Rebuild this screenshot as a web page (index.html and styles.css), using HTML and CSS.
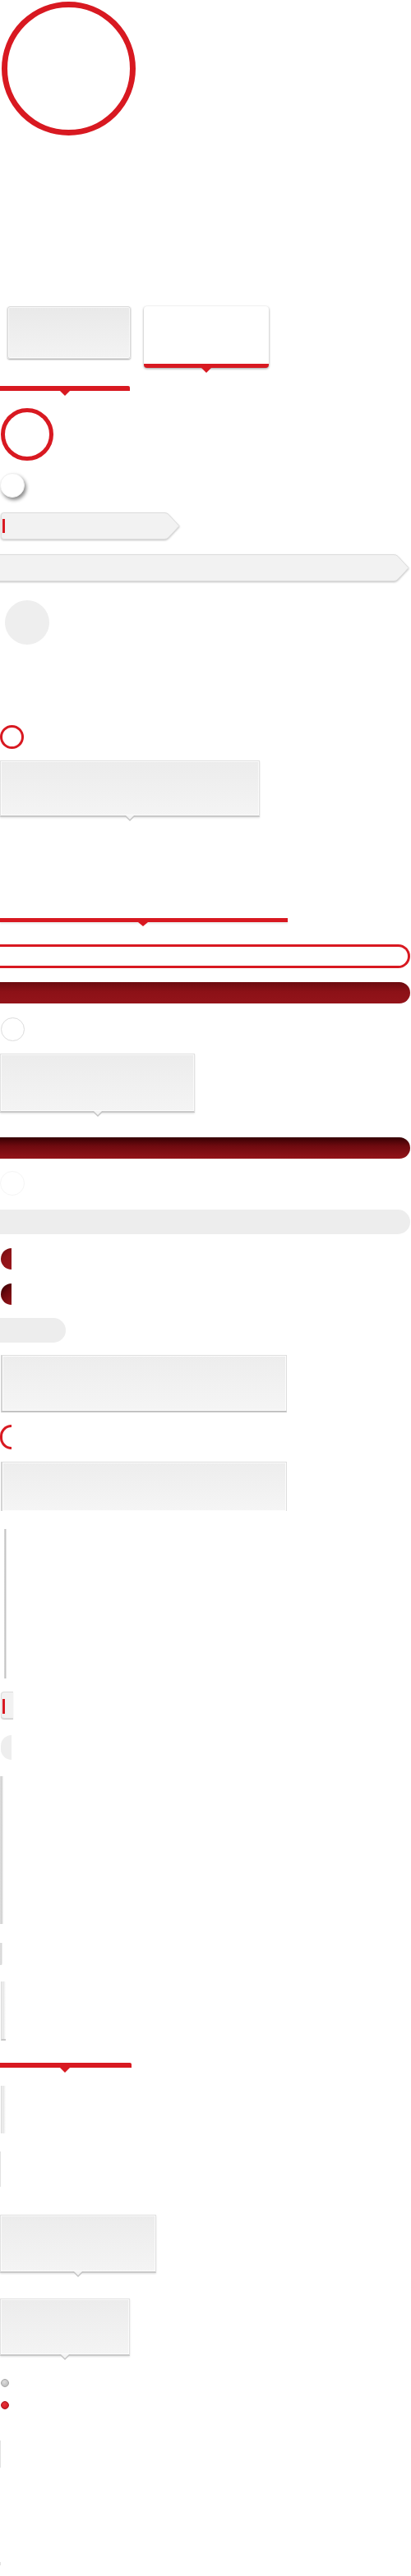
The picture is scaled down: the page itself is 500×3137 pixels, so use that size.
FILE: index.html
```html
<!DOCTYPE html>
<html lang="en">
<head>
<meta charset="utf-8">
<title>Sprite sheet</title>
<link rel="stylesheet" href="styles.css">
</head>
<body>
<div class="sheet">
  <div class="ring-big i1"></div>
  <div class="tabs-row i2">
    <div class="tab-off"></div>
    <div class="tab-on"></div>
  </div>
  <div class="red-bar i3"></div>
  <div class="ring-mid i4"></div>
  <div class="knob i5"></div>
  <svg class="arrow-tab i6" width="218" height="33" viewBox="0 0 218 33">
    <path d="M3.5,0.5 H199 Q202,0.5 204,2.5 L217,16.5 L204,30.5 Q202,32.5 199,32.5 H3.5 Q0.5,32.5 0.5,29.5 V3.5 Q0.5,0.5 3.5,0.5 Z" fill="#f2f2f2" stroke="#dcdcdc"/>
    <rect x="2" y="8" width="3" height="17" fill="#d81921"/>
  </svg>
  <svg class="arrow-tab i7" width="498" height="33" viewBox="0 0 498 33">
    <path d="M-2,0.5 H479 Q482,0.5 484,2.5 L497,16.5 L484,30.5 Q482,32.5 479,32.5 H-2 Z" fill="#f2f2f2" stroke="#dcdcdc"/>
  </svg>
  <div class="grey-circle i8"></div>
  <div class="ring-small i9"></div>
  <div class="tip tip1 i10"></div>
  <div class="red-line i11"></div>
  <div class="pill-outline i12"></div>
  <div class="pill-dark pill-dark1 i13"></div>
  <div class="ring-light i14"></div>
  <div class="tip tip2 i15"></div>
  <div class="pill-dark pill-dark2 i16"></div>
  <div class="ring-faint i17"></div>
  <div class="pill-grey i18"></div>
  <div class="half half-red i19"></div>
  <div class="half half-dark i20"></div>
  <div class="pill-grey-small i21"></div>
  <div class="panel i22"></div>
  <div class="half-ring i23"></div>
  <div class="panel panel-cut i24"></div>
  <div class="vshadow i25"></div>
  <div class="mini-tab i26"><span class="mini-mark"></span></div>
  <div class="half half-grey i27"></div>
  <div class="vshadow vshadow2 i28"></div>
  <div class="vshadow vshadow3 i29"></div>
  <div class="edge i30"></div>
  <div class="red-bar red-bar2 i31"></div>
  <div class="edge edge2 i32"></div>
  <div class="hair i33"></div>
  <div class="tip tip3 i34"></div>
  <div class="tip tip4 i35"></div>
  <div class="dot dot-grey i36"></div>
  <div class="dot dot-red i37"></div>
  <div class="hair hair2 i38"></div>
  <div class="hair hair3 i39"></div>
</div>
</body>
</html>
```
FILE: styles.css
```css
html, body {
  margin: 0;
  padding: 0;
  background: #ffffff;
  font-family: "Liberation Sans", Arial, sans-serif;
}

.sheet {
  display: flex;
  flex-direction: column;
  align-items: flex-start;
  min-height: 3137px;
}

.sheet > * { flex: none; }

/* ---------- rings ---------- */
.ring-big {
  width: 149px;
  height: 149px;
  border: 7px solid #d81921;
  border-radius: 50%;
}
.i1 { margin: 2px 0 0 2px; }

.ring-mid {
  width: 54px;
  height: 54px;
  border: 5px solid #d81921;
  border-radius: 50%;
}
.i4 { margin: 21px 0 0 1px; }

.ring-small {
  width: 23px;
  height: 23px;
  border: 3px solid #d81921;
  border-radius: 50%;
}
.i9 { margin: 98px 0 0 0; }

.ring-light {
  width: 27px;
  height: 27px;
  border: 1px solid #dcdcdc;
  border-radius: 50%;
}
.i14 { margin: 17px 0 0 1px; }

.ring-faint {
  width: 28px;
  height: 28px;
  border: 1px solid #f5f5f5;
  border-radius: 50%;
}
.i17 { margin: 15px 0 0 0; }

/* ---------- tabs ---------- */
.tabs-row {
  display: flex;
  align-items: flex-start;
  gap: 16px;
}
.i2 { margin: 208px 0 0 9px; }

.tab-off {
  width: 148px;
  height: 62px;
  border: 1px solid #dadada;
  border-radius: 3px;
  background: linear-gradient(#e9e9e9, #f3f3f3);
  box-shadow: 0 1px 2px rgba(0, 0, 0, 0.35), inset 0 0 0 1px rgba(255, 255, 255, 0.7);
}

.tab-on {
  position: relative;
  width: 152px;
  height: 70px;
  background: #ffffff;
  border-bottom: 5px solid #d81921;
  border-radius: 4px;
  box-shadow: 0 1px 3px rgba(0, 0, 0, 0.4);
}
.tab-on::after {
  content: "";
  position: absolute;
  left: 70px;
  bottom: -11px;
  border-left: 6px solid transparent;
  border-right: 6px solid transparent;
  border-top: 6px solid #d81921;
}

/* ---------- red bars ---------- */
.red-bar {
  position: relative;
  width: 158px;
  height: 6px;
  background: #d81921;
  border-radius: 0 2px 0 0;
}
.red-bar::after {
  content: "";
  position: absolute;
  left: 73px;
  top: 6px;
  border-left: 6px solid transparent;
  border-right: 6px solid transparent;
  border-top: 6px solid #d81921;
}
.i3 { margin: 22px 0 0 0; }

.red-bar2 { width: 160px; }
.i31 { margin: 27px 0 0 0; }

.red-line {
  position: relative;
  width: 350px;
  height: 5px;
  background: #d81921;
  box-shadow: 0 2px 2px rgba(0, 0, 0, 0.08);
}
.red-line::after {
  content: "";
  position: absolute;
  left: 168px;
  top: 5px;
  border-left: 6px solid transparent;
  border-right: 6px solid transparent;
  border-top: 5px solid #d81921;
}
.i11 { margin: 123px 0 0 0; }

/* ---------- knob ---------- */
.knob {
  width: 28px;
  height: 28px;
  border-radius: 50%;
  background: #ffffff;
  border: 1px solid #f0f0f0;
  box-shadow: 2px 3px 4px rgba(0, 0, 0, 0.45);
}
.i5 { margin: 15px 0 0 0; }

/* ---------- arrow tabs ---------- */
.arrow-tab {
  display: block;
  overflow: visible;
  filter: drop-shadow(0 1px 1px rgba(0, 0, 0, 0.25));
}
.i6 { margin: 18px 0 0 1px; }
.i7 { margin: 18px 0 0 0; }

/* ---------- grey shapes ---------- */
.grey-circle {
  width: 54px;
  height: 54px;
  border-radius: 50%;
  background: #eeeeee;
}
.i8 { margin: 23px 0 0 6px; }

.pill-grey {
  width: 499px;
  height: 30px;
  background: #ededed;
  border-radius: 0 15px 15px 0;
}
.i18 { margin: 17px 0 0 0; }

.pill-grey-small {
  width: 80px;
  height: 30px;
  background: #ededed;
  border-radius: 0 15px 15px 0;
}
.i21 { margin: 16px 0 0 0; }

/* ---------- pills ---------- */
.pill-outline {
  width: 496px;
  height: 23px;
  border: 3px solid #d81921;
  border-left: none;
  border-radius: 0 15px 15px 0;
}
.i12 { margin: 27px 0 0 0; }

.pill-dark {
  width: 499px;
  height: 26px;
  border-radius: 0 13px 13px 0;
}
.pill-dark1 { background: linear-gradient(#6b0a0e, #8c1117 45%, #93141a); }
.pill-dark2 { background: linear-gradient(#350003, #6e0a0f 40%, #93141a); }
.i13 { margin: 17px 0 0 0; }
.i16 { margin: 30px 0 0 0; }

/* ---------- half circles ---------- */
.half {
  width: 13px;
  height: 26px;
  border-radius: 13px 0 0 13px;
}
.half-red { background: linear-gradient(135deg, #6a0a0e, #8f1318 45%, #9a161c); }
.half-dark { background: linear-gradient(135deg, #2a0002, #6a090e 45%, #94141a); }
.half-grey {
  height: 30px;
  border-radius: 15px 0 0 15px;
  background: #eeeeee;
}
.i19 { margin: 17px 0 0 1px; }
.i20 { margin: 17px 0 0 1px; }
.i27 { margin: 20px 0 0 1px; }

.half-ring {
  width: 11px;
  height: 24px;
  border: 3px solid #d81921;
  border-right: none;
  border-radius: 15px 0 0 15px;
}
.i23 { margin: 15px 0 0 0; }

/* ---------- tooltips ---------- */
.tip {
  position: relative;
  background: linear-gradient(#ececec, #f4f4f4);
  border: 1px solid #e2e2e2;
  border-bottom: 2px solid #c9c9c9;
  box-shadow: inset 0 0 0 1px rgba(255, 255, 255, 0.7), 0 1px 2px rgba(0, 0, 0, 0.12);
}
.tip::before {
  content: "";
  position: absolute;
  left: calc(50% - 7px);
  bottom: -7px;
  border-left: 7px solid transparent;
  border-right: 7px solid transparent;
  border-top: 7px solid #c4c4c4;
}
.tip::after {
  content: "";
  position: absolute;
  left: calc(50% - 5px);
  bottom: -5px;
  border-left: 5px solid transparent;
  border-right: 5px solid transparent;
  border-top: 5px solid #f4f4f4;
}
.tip1 { width: 314px; height: 66px; }
.i10 { margin: 14px 0 0 0; }
.tip2 { width: 235px; height: 69px; }
.i15 { margin: 15px 0 0 0; }
.tip3 { width: 188px; height: 68px; }
.i34 { margin: 34px 0 0 0; }
.tip4 { width: 156px; height: 67px; }
.i35 { margin: 31px 0 0 0; }

/* ---------- panels ---------- */
.panel {
  width: 345px;
  height: 67px;
  background: linear-gradient(#ededed, #f5f5f5);
  border: 1px solid #dedede;
  border-left: 2px solid #d4d4d4;
  border-bottom: 2px solid #c2c2c2;
  box-shadow: inset 0 0 0 1px rgba(255, 255, 255, 0.8);
}
.i22 { margin: 15px 0 0 1px; }
.panel-cut {
  height: 59px;
  border-bottom: none;
}
.i24 { margin: 15px 0 0 1px; }

/* ---------- edges & shadows ---------- */
.vshadow {
  width: 3px;
  height: 182px;
  background: linear-gradient(to right, #dedede, #c4c4c4 50%, #f2f2f2);
}
.i25 { margin: 22px 0 0 5px; }
.vshadow2 {
  width: 4px;
  height: 180px;
  background: linear-gradient(to right, #e4e4e4, #cfcfcf 40%, #f4f4f4);
}
.i28 { margin: 20px 0 0 0; }
.vshadow3 {
  width: 3px;
  height: 27px;
  background: linear-gradient(to right, #e6e6e6, #d2d2d2 40%, #f6f6f6);
  border-radius: 0 0 2px 0;
}
.i29 { margin: 23px 0 0 0; }

.edge {
  width: 5px;
  height: 70px;
  border-left: 1px solid #dcdcdc;
  border-bottom: 2px solid #c8c8c8;
  background: linear-gradient(to right, #f0f0f0, #e6e6e6 40%, #ffffff);
}
.i30 { margin: 20px 0 0 1px; }
.edge2 {
  height: 58px;
  border-bottom: none;
}
.i32 { margin: 22px 0 0 1px; }

.mini-tab {
  position: relative;
  width: 14px;
  height: 31px;
  background: #f2f2f2;
  border: 1px solid #dcdcdc;
  border-right: none;
  border-radius: 4px 0 0 4px;
  box-shadow: 0 1px 1px rgba(0, 0, 0, 0.2);
}
.mini-mark {
  position: absolute;
  left: 1px;
  top: 8px;
  width: 3px;
  height: 18px;
  background: #d81921;
}
.i26 { margin: 16px 0 0 1px; }

.hair {
  width: 1px;
  height: 43px;
  background: #e2e2e2;
}
.i33 { margin: 22px 0 0 0; }
.hair2 { height: 33px; }
.i38 { margin: 38px 0 0 0; }
.hair3 { height: 4px; }
.i39 { margin: 115px 0 0 0; }

/* ---------- dots ---------- */
.dot {
  width: 8px;
  height: 8px;
  border-radius: 50%;
}
.dot-grey {
  background: radial-gradient(circle at 40% 35%, #dcdcdc, #b4b4b4);
  border: 1px solid #a4a4a4;
}
.dot-red {
  background: radial-gradient(circle at 40% 35%, #e8323a, #c8161d);
  border: 1px solid #a8121a;
}
.i36 { margin: 28px 0 0 1px; }
.i37 { margin: 17px 0 0 1px; }
```
